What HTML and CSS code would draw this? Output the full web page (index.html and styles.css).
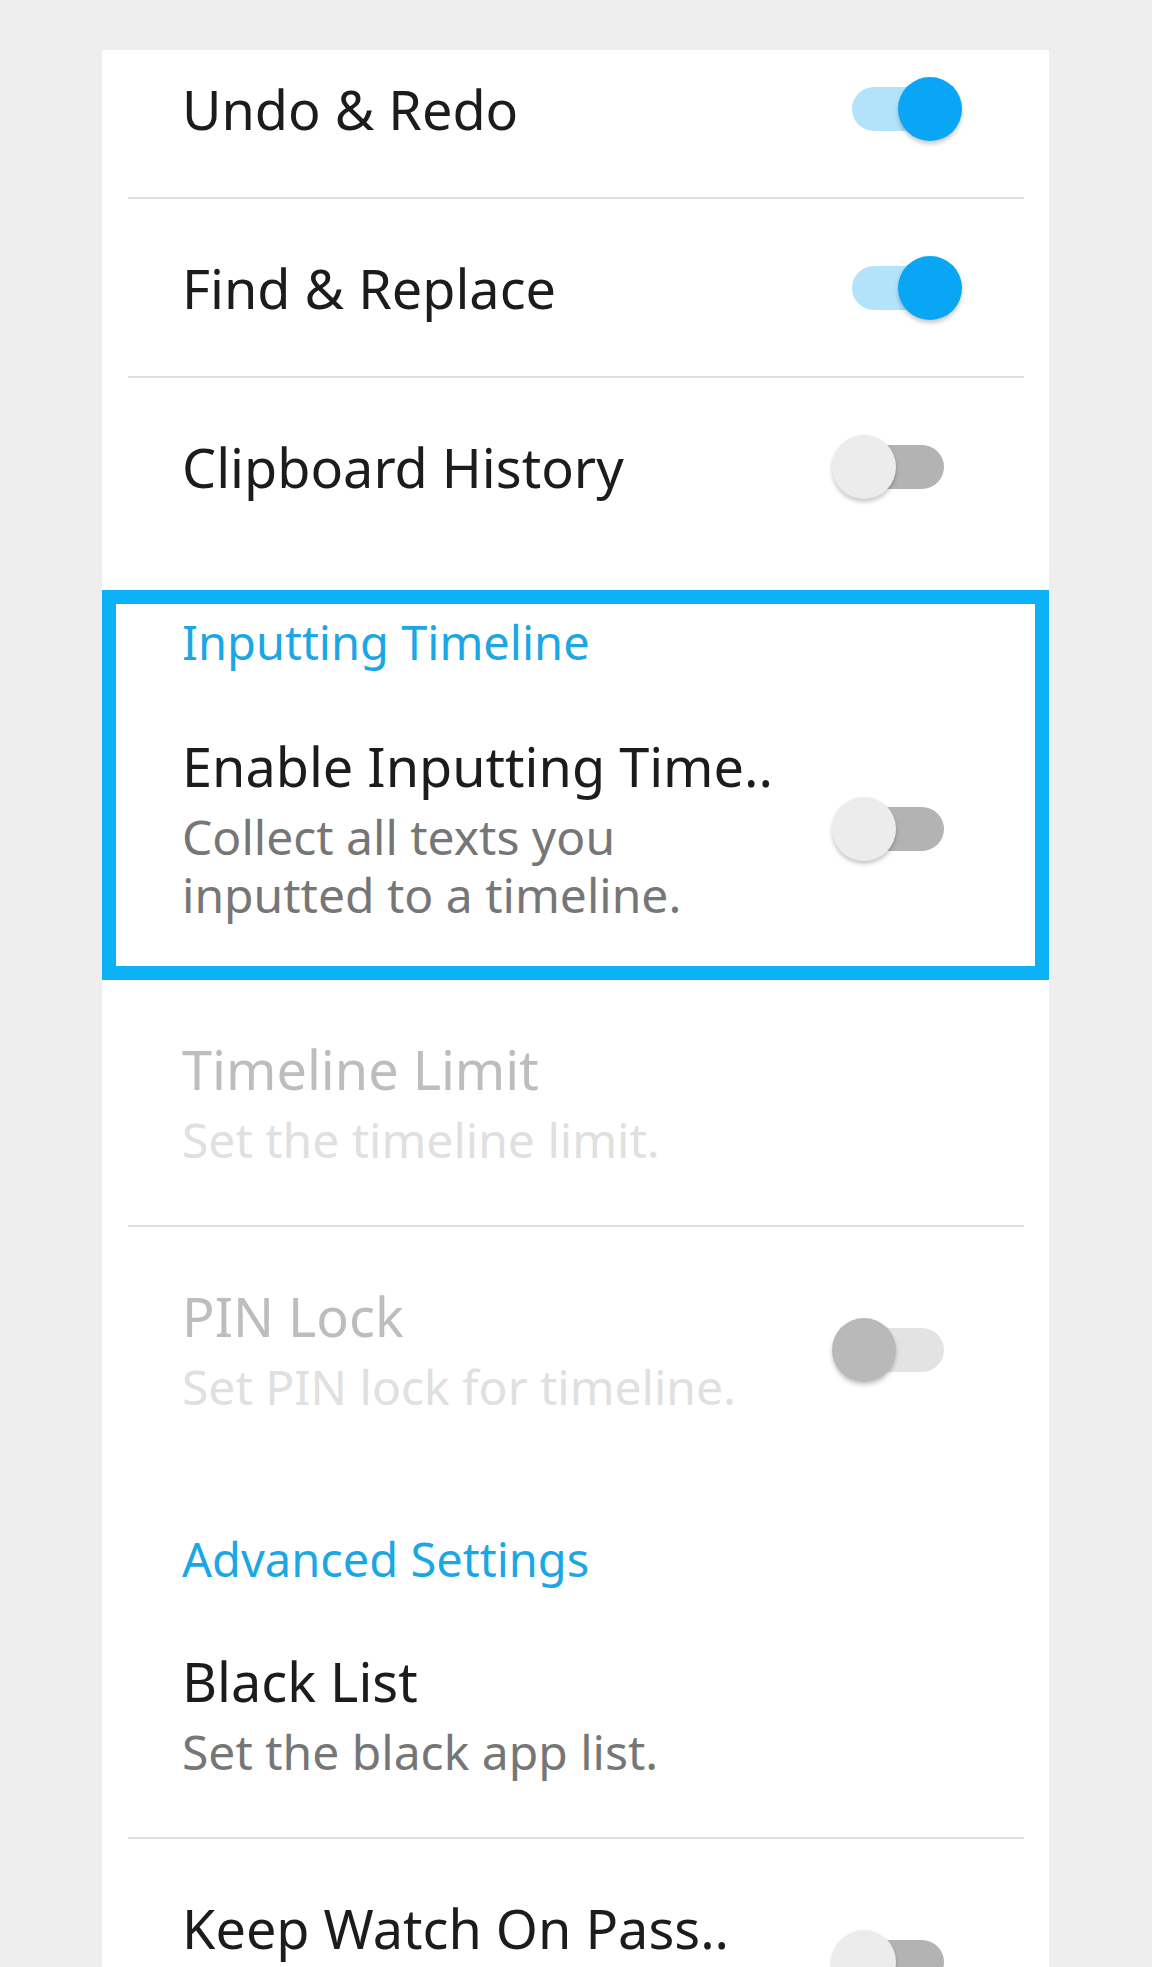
FILE: index.html
```html
<!DOCTYPE html>
<html lang="en">
<head>
  <meta charset="UTF-8" />
  <title>Settings</title>
  <meta name="viewport" content="width=device-width, initial-scale=1.0"/>
  <link rel="stylesheet" href="styles.css">
</head>
<body>

<div class="card">

  <div class="pref first">
    <div class="pref-text">
      <div class="pref-title">Undo &amp; Redo</div>
    </div>
    <div class="switch on"><span class="track"></span><span class="knob"></span></div>
  </div>
  <div class="divider"></div>

  <div class="pref">
    <div class="pref-text">
      <div class="pref-title">Find &amp; Replace</div>
    </div>
    <div class="switch on"><span class="track"></span><span class="knob"></span></div>
  </div>
  <div class="divider"></div>

  <div class="pref">
    <div class="pref-text">
      <div class="pref-title">Clipboard History</div>
    </div>
    <div class="switch"><span class="track"></span><span class="knob"></span></div>
  </div>

  <div class="highlight">
    <div class="category-title">Inputting Timeline</div>
    <div class="pref">
      <div class="pref-text">
        <div class="pref-title">Enable Inputting Time..</div>
        <div class="pref-summary">Collect all texts you<br>inputted to a timeline.</div>
      </div>
      <div class="switch"><span class="track"></span><span class="knob"></span></div>
    </div>
  </div>

  <div class="pref disabled">
    <div class="pref-text">
      <div class="pref-title">Timeline Limit</div>
      <div class="pref-summary">Set the timeline limit.</div>
    </div>
  </div>
  <div class="divider"></div>

  <div class="pref disabled">
    <div class="pref-text">
      <div class="pref-title">PIN Lock</div>
      <div class="pref-summary">Set PIN lock for timeline.</div>
    </div>
    <div class="switch"><span class="track"></span><span class="knob"></span></div>
  </div>

  <div class="category-title">Advanced Settings</div>

  <div class="pref">
    <div class="pref-text">
      <div class="pref-title">Black List</div>
      <div class="pref-summary">Set the black app list.</div>
    </div>
  </div>
  <div class="divider"></div>

  <div class="pref">
    <div class="pref-text">
      <div class="pref-title">Keep Watch On Pass..</div>
      <div class="pref-summary">Watch password inputs.</div>
    </div>
    <div class="switch"><span class="track"></span><span class="knob"></span></div>
  </div>

</div>

</body>
</html>
```

FILE: styles.css
```css
body {
  margin: 0;
  background-color: #eeeeee;
  font-family: "Noto Sans", "Open Sans", sans-serif;
  height: 1967px;
  overflow: hidden;
}
.card {
  background: #fff;
  width: 947px;
  margin: 50px 0 0 102px;
}
.pref {
  display: flex;
  align-items: center;
  justify-content: space-between;
  padding: 55px 87px 54px 80px;
}
.pref.first {
  padding-top: 25px;
}
.pref-title {
  font-size: 54px;
  line-height: 68px;
  color: #1c1c1c;
  white-space: nowrap;
}
.pref-summary {
  font-size: 48px;
  line-height: 58px;
  margin: 8px 0 2px;
  color: #767676;
  white-space: nowrap;
}
.pref.disabled .pref-title {
  color: #bdbdbd;
}
.pref.disabled .pref-summary {
  color: #e0e0e0;
}
.divider {
  height: 2px;
  background: #dedede;
  margin: 0 25px 0 26px;
}
.category-title {
  font-size: 47px;
  line-height: 60px;
  color: #1ba7e5;
  padding: 57px 80px 3px;
}
.highlight {
  margin-top: 35px;
  outline: 14px solid #0cb0f6;
  outline-offset: -14px;
}
.highlight .category-title {
  padding-top: 22px;
  padding-bottom: 5px;
}

/* switch */
.switch {
  position: relative;
  flex: none;
  width: 130px;
  height: 64px;
}
.switch .track {
  position: absolute;
  left: 20px;
  right: 18px;
  top: 10px;
  height: 44px;
  border-radius: 22px;
  background: #b3b3b3;
}
.switch .knob {
  position: absolute;
  left: 0;
  top: 0;
  width: 64px;
  height: 64px;
  border-radius: 50%;
  background: #ececec;
  box-shadow: 0 3px 4px rgba(0, 0, 0, 0.22);
}
.switch.on .track {
  background: #b3e3fb;
}
.switch.on .knob {
  left: auto;
  right: 0;
  background: #08a6f4;
}
.pref.disabled .switch .track {
  background: #e3e3e3;
}
.pref.disabled .switch .knob {
  background: #b9b9b9;
}
```
